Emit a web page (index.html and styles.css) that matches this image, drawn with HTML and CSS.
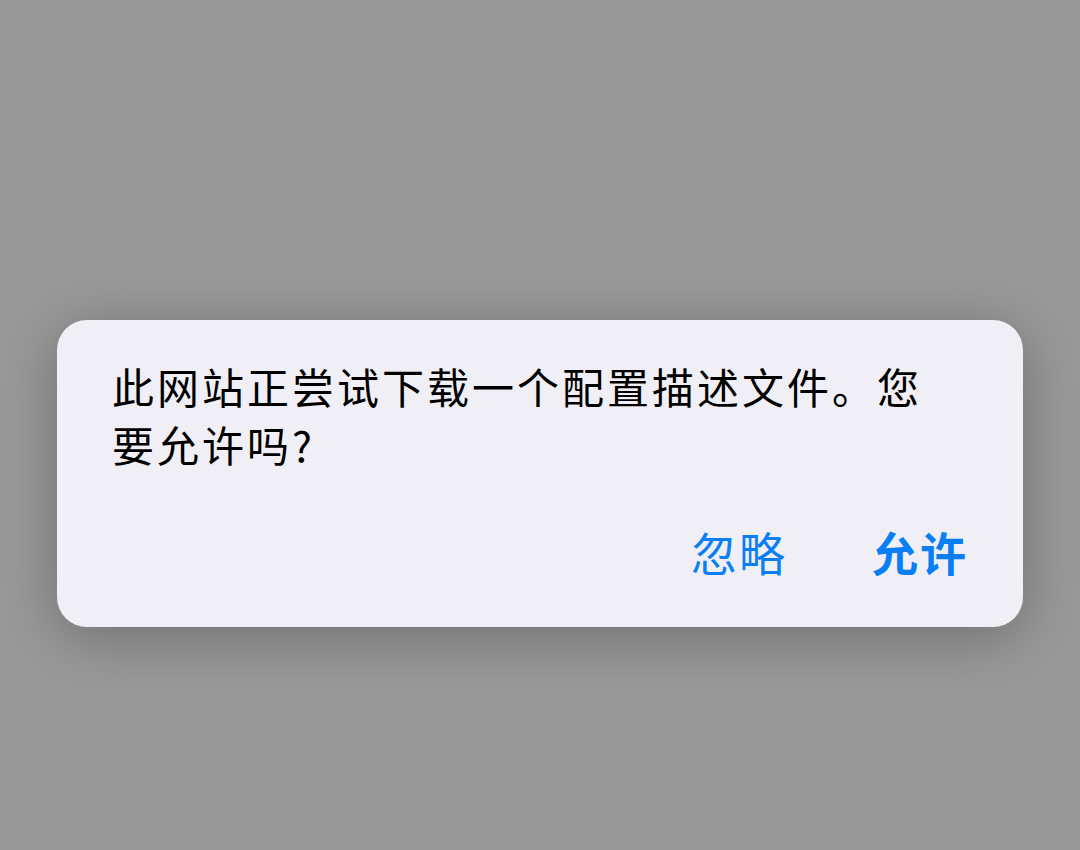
FILE: index.html
```html
<!DOCTYPE html>
<html lang="zh-CN">
<head>
  <meta charset="UTF-8" />
  <title>描述文件</title>
  <link rel="stylesheet" href="styles.css">
</head>
<body>
  <div class="alerta">
    <p class="mensaje">此网站正尝试下载一个配置描述文件。您要允许吗?</p>
    <div class="acciones">
      <button class="boton">忽略</button>
      <button class="boton principal">允许</button>
    </div>
  </div>
</body>
</html>
```

FILE: styles.css
```css
html, body {
  height: 100%;
}

body {
  margin: 0;
  background-color: #999999;
  font-family: "Noto Sans CJK SC", "Noto Sans", sans-serif;
  display: flex;
  flex-direction: column;
  align-items: center;
  padding-top: 320px;
  box-sizing: border-box;
}

.alerta {
  width: 966px;
  height: 307px;
  box-sizing: border-box;
  background: #f0eff5;
  border-radius: 30px;
  padding: 37px 55px 0 55px;
  box-shadow: 0 10px 60px rgba(0, 0, 0, 0.28);
}

.mensaje {
  margin: 0;
  max-width: 840px;
  font-size: 42px;
  line-height: 58px;
  letter-spacing: 3px;
  color: #000;
}

.acciones {
  display: flex;
  justify-content: flex-end;
  gap: 85px;
  margin-top: 52px;
}

.boton {
  background: none;
  border: none;
  padding: 0;
  font-family: inherit;
  font-size: 46px;
  line-height: 52px;
  letter-spacing: 2px;
  color: #0a7ff5;
  cursor: pointer;
}

.principal {
  font-weight: bold;
}
```
